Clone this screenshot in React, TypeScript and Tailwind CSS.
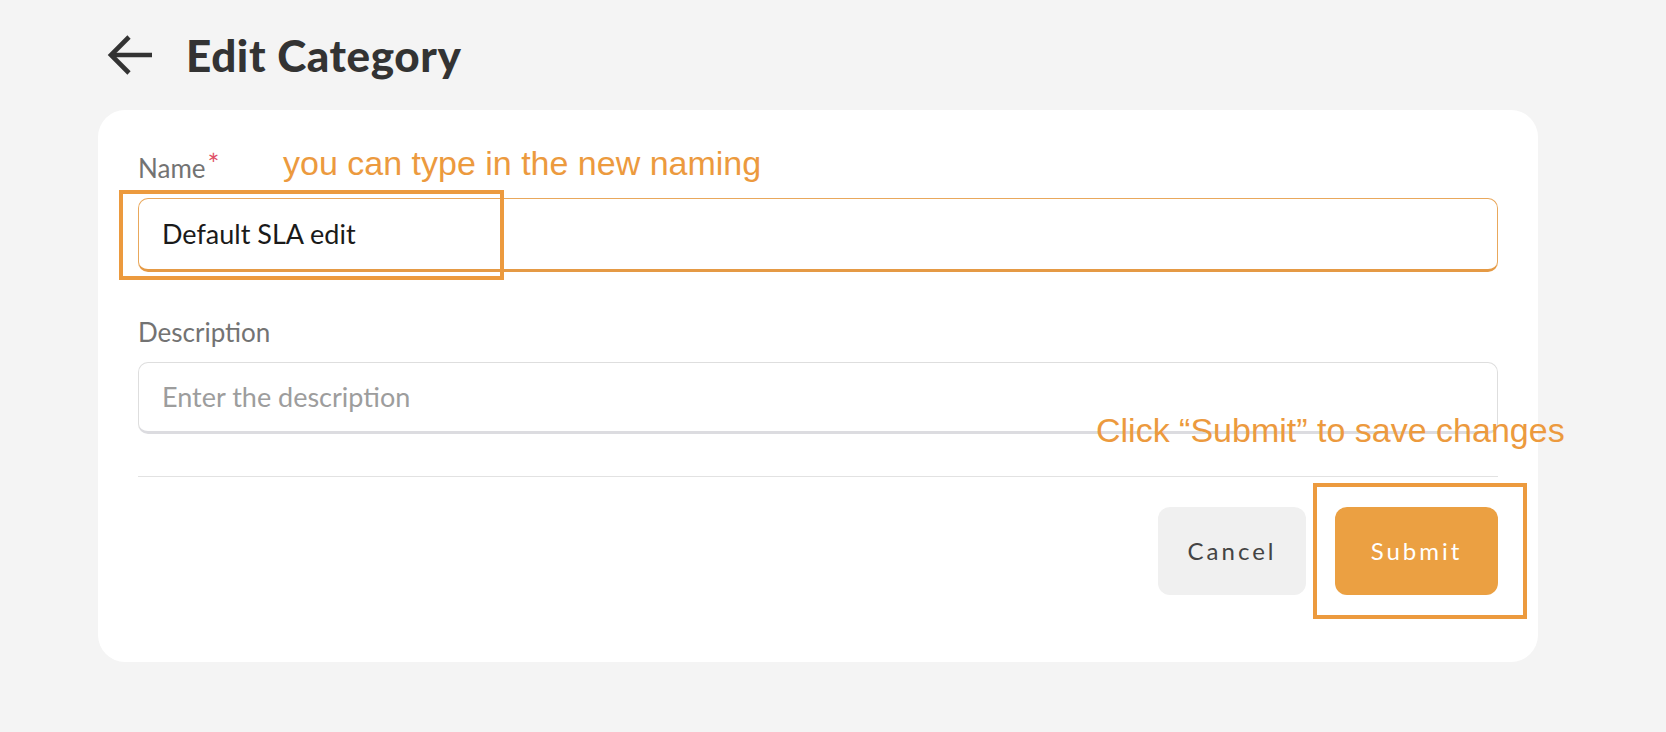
const ui = { fontFamily: 'Lato, "Noto Sans", sans-serif' };
const note = { fontFamily: '"Liberation Sans", Arial, sans-serif' };

function BackArrow() {
  return (
    <svg width="46" height="40" viewBox="0 0 46 40" fill="none" stroke="#333333" strokeWidth="4.6" strokeLinecap="butt" strokeLinejoin="miter">
      <path d="M45 20H4" />
      <path d="M22 2L4 20l18 18" />
    </svg>
  );
}

export default function App() {
  return (
    <div className="relative w-full h-[732px] bg-[#f4f4f4] overflow-hidden" style={ui}>
      <div className="flex items-center h-[74px] mt-[18px] pl-[107px] gap-[33px]">
        <BackArrow />
        <h1 className="text-[44px] font-black text-[#333333] leading-none tracking-[0.6px]">Edit Category</h1>
      </div>

      <div className="ml-[98px] mt-[18px] w-[1440px] h-[552px] rounded-[27px] bg-white px-[40px] flex flex-col">
        <label className="mt-[42px] h-[32px] leading-[32px] text-[26px] text-[#737373] flex items-start">
          <span>Name</span>
          <span className="text-[#e05067] text-[28px] leading-[28px] ml-[2px] -mt-[2px]">*</span>
        </label>
        <div className="mt-[14px] h-[74px] rounded-[10px] border border-[#e9a85c] border-b-[3px] border-b-[#e59a45] flex items-center px-[23px]">
          <span className="text-[27px] text-[#1a1a1a]">Default SLA edit</span>
        </div>

        <label className="mt-[44px] h-[32px] leading-[32px] text-[26px] text-[#737373]">Description</label>
        <div className="mt-[14px] h-[72px] rounded-[10px] border border-[#dedede] border-b-[3px] border-b-[#dcdce0] flex items-center px-[23px]">
          <span className="text-[27px] text-[#9d9d9d]">Enter the description</span>
        </div>

        <div className="mt-[42px] h-px bg-[#e2e2e2]" />

        <div className="mt-[30px] flex justify-end gap-[29px]">
          <button className="w-[148px] h-[88px] rounded-[12px] bg-[#f0f0f0] text-[24px] tracking-[3px] text-[#444444]">
            Cancel
          </button>
          <button className="w-[163px] h-[88px] rounded-[12px] bg-[#eba042] text-[24px] tracking-[3px] text-white">
            Submit
          </button>
        </div>
      </div>

      {/* annotation overlays */}
      <div className="absolute left-[283px] top-[143px] text-[34px] leading-[40px] text-[#ec9a3e]" style={note}>
        you can type in the new naming
      </div>
      <div className="absolute left-[119px] top-[190px] w-[385px] h-[90px] border-[4px] border-[#ec9a3e]" />

      <div className="absolute left-[1096px] top-[410px] text-[34px] leading-[40px] text-[#ec9a3e] whitespace-nowrap" style={note}>
        Click “Submit” to save changes
      </div>
      <div className="absolute left-[1313px] top-[483px] w-[214px] h-[136px] border-[4px] border-[#ec9a3e]" />
    </div>
  );
}
